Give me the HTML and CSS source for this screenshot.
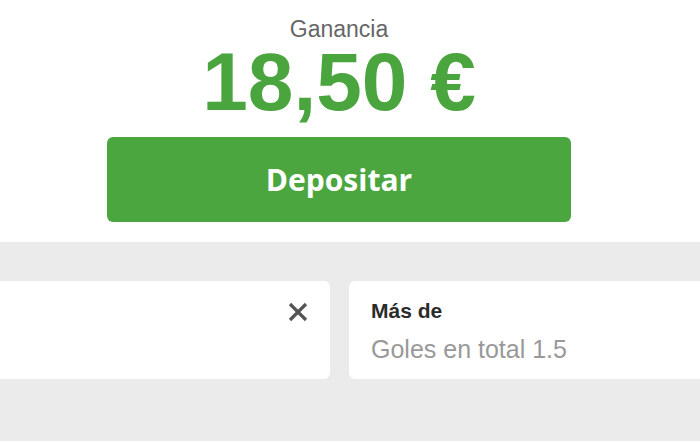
FILE: index.html
```html
<!DOCTYPE html>
<html lang="es">
<head>
<meta charset="utf-8">
<link rel="stylesheet" href="styles.css">
</head>
<body>
<section class="summary">
  <div class="label">Ganancia</div>
  <div class="amount">18,50 €</div>
  <button class="deposit">Depositar</button>
</section>
<section class="tray">
  <div class="cards">
    <div class="card card-left">
      <svg class="close" width="20" height="20" viewBox="0 0 20 20" aria-hidden="true">
        <path d="M2 2 L18 18 M18 2 L2 18" stroke="#555" stroke-width="3.2" stroke-linecap="butt" fill="none"/>
      </svg>
    </div>
    <div class="card card-right">
      <div class="title">Más de</div>
      <div class="sub">Goles en total 1.5</div>
    </div>
  </div>
</section>
</body>
</html>
```
FILE: styles.css
```css
html, body {
  margin: 0;
  padding: 0;
  background: #fff;
  overflow: hidden;
  width: 700px;
  height: 441px;
}
body {
  font-family: "Liberation Sans", Arial, sans-serif;
}
.summary {
  width: 464px;
  margin-left: 107px;
  padding-top: 17px;
  height: 242px;
  box-sizing: border-box;
  text-align: center;
}
.label {
  font-size: 23px;
  line-height: 24px;
  color: #666;
}
.amount {
  font-size: 82px;
  line-height: 82px;
  font-weight: bold;
  color: #4aa53f;
}
.deposit {
  display: block;
  margin-top: 14px;
  width: 464px;
  height: 85px;
  border: 0;
  border-radius: 6px;
  background: #4ca63f;
  color: #fff;
  font-family: "Open Sans", sans-serif;
  font-weight: 700;
  font-size: 30px;
  padding: 0;
}
.tray {
  background: #ebebeb;
  height: 199px;
  padding-top: 39px;
  box-sizing: border-box;
}
.cards {
  display: flex;
  gap: 19px;
  margin-left: -20px;
}
.card {
  background: #fff;
  border-radius: 6px;
  height: 98px;
  box-sizing: border-box;
  flex: none;
}
.card-left {
  width: 350px;
  display: flex;
  justify-content: flex-end;
  padding: 21px 22px 0 0;
}
.close {
  display: block;
}
.card-right {
  width: 380px;
  padding: 18px 0 0 22px;
}
.title {
  font-weight: bold;
  font-size: 21px;
  line-height: 24px;
  color: #2b2b2b;
}
.sub {
  margin-top: 12px;
  font-size: 25px;
  line-height: 28px;
  color: #999;
}
```
